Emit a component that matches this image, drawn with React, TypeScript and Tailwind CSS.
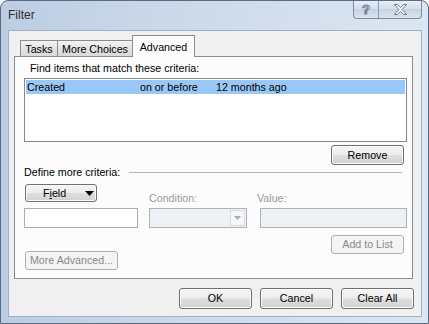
const btnBase =
  "flex items-center rounded-[3px] border border-[#707070] bg-[linear-gradient(to_bottom,#f6f6f6_0%,#ececec_48%,#dedede_52%,#d2d2d2_100%)] shadow-[inset_0_0_0_1px_#fbfbfb] text-black";
const btn = `${btnBase} justify-center`;
const btnOff =
  "flex items-center justify-center rounded-[3px] border border-[#adb2b5] bg-[#f4f4f4] text-[#8a8a8a]";

function CaptionButtons() {
  return (
    <div className="mr-[6px] flex h-[18px] overflow-hidden rounded-b-[4px] border border-t-0 border-[#7d8ba0] bg-[linear-gradient(to_bottom,#e6eef7,#d2deeb_50%,#c4d3e4_50%,#d9e4f1)]">
      <div className="flex w-[25px] items-center justify-center border-r border-[#8c9ab0] text-[13px] leading-none font-bold text-[#f4f7fb] [-webkit-text-stroke:1px_#6d7a8c]">
        ?
      </div>
      <div className="flex w-[42px] items-center justify-center">
        <svg width="13" height="11" viewBox="0 0 13 11">
          <polygon
            points="0.5,0.5 3.5,0.5 6.5,3.6 9.5,0.5 12.5,0.5 8.2,5.5 12.5,10.5 9.5,10.5 6.5,7.4 3.5,10.5 0.5,10.5 4.8,5.5"
            fill="#f4f7fb"
            stroke="#6d7a8c"
            strokeWidth="1"
          />
        </svg>
      </div>
    </div>
  );
}

function Tab({ label, width, active }: { label: string; width: string; active?: boolean }) {
  if (active) {
    return (
      <div
        className={`relative z-10 -mb-px flex h-[22px] items-start justify-center border border-b-0 border-[#898c95] bg-[#fcfcfc] pt-[4px] leading-[14px] ${width}`}
      >
        {label}
      </div>
    );
  }
  return (
    <div
      className={`-mr-px flex h-[16px] items-start justify-center border border-b-0 border-[#898c95] bg-[linear-gradient(to_bottom,#f3f3f3,#e3e3e3_50%,#d9d9d9)] pt-[1px] leading-[14px] ${width}`}
    >
      {label}
    </div>
  );
}

export default function App() {
  return (
    <div className="flex h-[324px] w-[429px] flex-col overflow-hidden rounded-t-[8px] border border-[#5c6b80] bg-[linear-gradient(to_right,#bccde3,#cddaea_45%,#dbe6f3)] font-['Liberation_Sans',Arial,sans-serif] text-[10.7px] text-black">
      <div className="flex h-[29px] shrink-0 items-start justify-between">
        <div className="mt-[6px] ml-[7px] text-[12px] leading-[16px] text-[#2b2f36]">Filter</div>
        <CaptionButtons />
      </div>

      <div className="mr-[6px] mb-[6px] ml-[7px] flex flex-1 flex-col border border-[#9fb0c6] bg-[#f0f0f0]">
        <div className="ml-[11px] flex h-[25px] items-end pt-[4px]">
          <Tab label="Tasks" width="w-[38px]" />
          <Tab label="More Choices" width="w-[76px]" />
          <Tab label="Advanced" width="w-[63px]" active />
        </div>

        <div className="mr-[8px] ml-[5px] flex h-[223px] flex-col border border-[#898c95] bg-[#fcfcfc]">
          <div className="mt-[3px] ml-[15px] leading-[16px]">Find items that match these criteria:</div>

          <div className="mt-[2px] ml-[9px] h-[64px] w-[383px] border border-[#828790] bg-white p-px">
            <div className="flex h-[14px] items-center bg-[#99c8f6] leading-[14px]">
              <span className="ml-px w-[113px]">Created</span>
              <span className="w-[76px]">on or before</span>
              <span>12 months ago</span>
            </div>
          </div>

          <div className="mt-[3px] mr-[8px] flex justify-end">
            <div className={`${btn} h-[20px] w-[73px]`}>Remove</div>
          </div>

          <div className="mr-[10px] ml-[9px] flex h-[14px] items-center leading-[14px]">
            <span>Define more criteria:</span>
            <div className="ml-[9px] h-px flex-1 bg-[#b4b4b4]" />
          </div>

          <div className="mt-[5px] ml-[9px] flex h-[22px] items-end">
            <div className="w-[125px] self-start">
              <div className={`${btnBase} ml-px h-[18px] w-[72px] justify-between pr-[2px] pl-[17px]`}>
                <span>
                  F<span className="underline">i</span>eld
                </span>
                <svg width="9" height="5" viewBox="0 0 9 5">
                  <polygon points="0,0 9,0 4.5,5" fill="#000" />
                </svg>
              </div>
            </div>
            <div className="w-[108px] leading-[16px] text-[#9a9a9a]">Condition:</div>
            <div className="leading-[16px] text-[#9a9a9a]">Value:</div>
          </div>

          <div className="mt-[2px] ml-[9px] flex">
            <div className="h-[20px] w-[114px] border border-[#abadb3] bg-white" />
            <div className="ml-[11px] flex h-[20px] w-[98px] border border-[#adb2b5] bg-[#edf1f6]">
              <div className="flex-1" />
              <div className="m-px flex w-[15px] items-center justify-center border border-[#d8dde3] bg-[#f4f6f9]">
                <svg width="7" height="4" viewBox="0 0 7 4">
                  <polygon points="0,0 7,0 3.5,4" fill="#a9aeb4" />
                </svg>
              </div>
            </div>
            <div className="ml-[13px] h-[20px] w-[147px] border border-[#adb2b5] bg-[#edf1f6]" />
          </div>

          <div className="mt-[7px] mr-[8px] ml-[10px] flex items-start justify-between">
            <div className={`${btnOff} mt-[16px] h-[19px] w-[93px]`}>More Advanced...</div>
            <div className={`${btnOff} h-[19px] w-[73px]`}>Add to List</div>
          </div>
        </div>

        <div className="mt-[9px] mr-[7px] flex justify-end gap-[8px]">
          <div className={`${btn} h-[21px] w-[73px]`}>OK</div>
          <div className={`${btn} h-[21px] w-[73px]`}>Cancel</div>
          <div className={`${btn} h-[21px] w-[73px]`}>Clear All</div>
        </div>
      </div>
    </div>
  );
}
